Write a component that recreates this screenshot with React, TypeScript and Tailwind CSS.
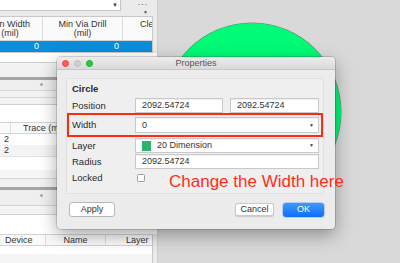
function Splitter() {
  return <div className="h-[3px] bg-[#a5a5a5]" />;
}

function LeftPanel() {
  return (
    <div className="w-[158px] h-full shrink-0 flex flex-col bg-[#ebebeb] border-r border-[#cdcdcd] text-[9px] leading-none text-[#333]">
      {/* toolbar */}
      <div className="h-[16px] shrink-0 flex">
        <div className="w-[121px] h-[11px] bg-white border-b border-r border-[#c4c4c4] flex items-center justify-end pr-[2px] text-[6px] text-[#444]">
          ▼
        </div>
        <div className="ml-[12px] w-[15px] flex flex-col items-end pt-[1px] text-[#555]">
          <span className="text-[9px] leading-[7px] tracking-[0.5px]">···</span>
          <span className="text-[5px] leading-[5px] mt-[2px]">▼</span>
        </div>
      </div>

      {/* table 1 */}
      <div className="mr-[4px] bg-white border-t border-r border-b border-[#c9c9c9]">
        <div className="h-[24px] flex border-b border-[#d4d4d4] bg-[#fafafa]">
          <div className="w-[43px] shrink-0 overflow-hidden border-r border-[#dcdcdc] flex">
            <div className="w-[66px] -ml-[23px] shrink-0 text-center leading-[9px] pt-[3px]">
              Min Width
              <br />
              (mil)
            </div>
          </div>
          <div className="w-[80px] shrink-0 border-r border-[#dcdcdc] text-center leading-[9px] pt-[3px]">
            Min Via Drill
            <br />
            (mil)
          </div>
          <div className="flex-1 overflow-hidden flex">
            <div className="w-[75px] shrink-0 text-center leading-[9px] pt-[3px]">
              Clearance
              <br />
              (mil)
            </div>
          </div>
        </div>
        <div className="h-[11px] flex items-center bg-[#0a8ddb] text-white">
          <div className="w-[43px] text-right pr-[4px]">0</div>
          <div className="w-[80px] text-right pr-[4px]">0</div>
        </div>
      </div>

      <div className="h-[10px] bg-white border-b border-[#cfcfcf]" />
      <div className="h-[14px] bg-[#f2f2f2]" />
      <Splitter />
      <div className="h-[10px] bg-[#efefef] flex items-center justify-center pr-[74px]">
        <div className="w-[3px] h-[3px] rounded-full bg-[#a9a9a9]" />
      </div>
      <div className="h-[7px] bg-[#f3f3f3] border-t border-[#d6d6d6]" />
      <div className="h-[7px] bg-[#f3f3f3] border-t border-[#d6d6d6]" />
      <div className="h-[19px] bg-white border-t border-[#cfcfcf]" />

      {/* table 2 */}
      <div className="mr-[4px] bg-white border-r border-[#c9c9c9]">
        <div className="h-[12px] flex items-center border-t border-b border-[#d4d4d4] bg-[#fafafa]">
          <div className="w-[11px] h-full border-r border-[#dcdcdc]" />
          <div className="pl-[12px] whitespace-nowrap">Trace (mil)</div>
        </div>
        <div className="h-[11px] flex items-center pl-[4px]">2</div>
        <div className="h-[11px] flex items-center pl-[4px] bg-[#f4f4f4]">2</div>
        <div className="h-[14px] border-t border-[#e2e2e2]" />
        <div className="h-[8px] bg-[#f6f6f6]" />
      </div>
      <div className="h-[9px] bg-[#f2f2f2] border-t border-[#d6d6d6]" />
      <Splitter />
      <div className="h-[16px] bg-[#efefef] flex items-center justify-center pr-[74px] pb-[4px] border-b border-[#d2d2d2]">
        <div className="w-[3px] h-[3px] rounded-full bg-[#a9a9a9]" />
      </div>
      <div className="h-[9px] bg-[#f4f4f4] border-b border-[#d2d2d2]" />
      <div className="h-[19px] bg-white" />

      {/* table 3 */}
      <div className="mr-[4px] flex-1 bg-white border-r border-[#c9c9c9]">
        <div className="h-[12px] flex items-center border-t border-b border-[#d4d4d4] bg-[#fafafa]">
          <div className="w-[46px] h-full flex items-center pl-[5px] border-r border-[#dcdcdc]">Device</div>
          <div className="w-[60px] h-full flex items-center justify-center border-r border-[#dcdcdc]">Name</div>
          <div className="flex-1 pl-[20px]">Layer</div>
        </div>
        <div className="h-[8px]" />
        <div className="h-[9px] bg-[#f5f5f5]" />
      </div>
    </div>
  );
}

function Field({ children, arrow, className = "" }: { children?: React.ReactNode; arrow?: boolean; className?: string }) {
  return (
    <div
      className={`h-[15px] bg-white border border-[#c9c9c9] shadow-[inset_0_1px_0_rgba(0,0,0,0.06)] flex items-center pl-[6px] pr-[4px] text-[9px] text-[#333] ${className}`}
    >
      <div className="flex-1 flex items-center">{children}</div>
      {arrow && <span className="text-[5px] text-[#444]">▼</span>}
    </div>
  );
}

function Dialog() {
  return (
    <div className="absolute left-[57px] top-[57px] w-[278px] h-[172px] bg-[#ececec] rounded-[4px] shadow-[0_6px_18px_rgba(0,0,0,0.35),0_0_0_1px_rgba(0,0,0,0.14)] flex flex-col overflow-hidden text-[#2b2b2b]">
      {/* title bar */}
      <div className="h-[13px] shrink-0 grid grid-cols-[1fr_auto_1fr] items-center bg-gradient-to-b from-[#ececec] to-[#dadada] border-b border-[#c6c6c6]">
        <div className="flex gap-[5px] pl-[5px]">
          <div className="w-[7px] h-[7px] rounded-full bg-[#fc5f57] border-[0.5px] border-[#de4a42]" />
          <div className="w-[7px] h-[7px] rounded-full bg-[#d0d0d0] border-[0.5px] border-[#bcbcbc]" />
          <div className="w-[7px] h-[7px] rounded-full bg-[#2ac840] border-[0.5px] border-[#1eaa32]" />
        </div>
        <div className="text-[9px] leading-none text-[#555]">Properties</div>
        <div />
      </div>

      {/* group box */}
      <div className="mx-[9px] mt-[8px] w-[258px] border border-[#e0e0e0] bg-[#efefef] rounded-[2px] pl-[5px] pr-[4px] pt-[4px] pb-[10px] text-[9.5px] leading-none">
        <div className="h-[12px] flex items-center font-bold">Circle</div>
        <div className="mt-[3px] flex items-center">
          <div className="w-[63px]">Position</div>
          <Field className="w-[88px]">2092.54724</Field>
          <Field className="w-[89px] ml-[7px]">2092.54724</Field>
        </div>
        <div className="-ml-[5px] -mr-[4px] h-[24px] border-2 border-[#ff2a10] flex items-center pl-[3px] pr-[2px]">
          <div className="w-[63px]">Width</div>
          <Field arrow className="flex-1 h-[16px]">0</Field>
        </div>
        <div className="mt-[1px] flex items-center">
          <div className="w-[63px]">Layer</div>
          <Field arrow className="flex-1 pl-[2px]">
            <span className="w-[9px] h-[10px] bg-[#2bb26c] mr-[6px]" />
            20 Dimension
          </Field>
        </div>
        <div className="mt-[1px] flex items-center">
          <div className="w-[63px]">Radius</div>
          <Field className="flex-1">2092.54724</Field>
        </div>
        <div className="mt-[4px] h-[10px] flex items-center">
          <div className="w-[65px]">Locked</div>
          <div className="w-[8px] h-[8px] bg-white border border-[#9c9c9c] rounded-[1.5px]" />
        </div>
      </div>

      {/* buttons */}
      <div className="mt-auto pb-[12px] pl-[12px] pr-[11px] flex items-center text-[9px] leading-none">
        <div className="w-[46px] h-[15px] bg-white border border-[#b8b8b8] rounded-[3px] flex items-center justify-center text-[#333]">
          Apply
        </div>
        <div className="flex-1" />
        <div className="w-[39px] h-[13px] bg-white border border-[#cbcbcb] rounded-[3px] shadow-[0_0.5px_1px_rgba(0,0,0,0.15)] flex items-center justify-center text-[#333]">
          Cancel
        </div>
        <div className="ml-[9px] w-[41px] h-[14px] rounded-[3px] bg-gradient-to-b from-[#3f99fb] to-[#0b6df5] shadow-[0_0_0_1px_rgba(80,150,250,0.35)] flex items-center justify-center text-white">
          OK
        </div>
      </div>
    </div>
  );
}

export default function App() {
  return (
    <div className="relative flex h-[263px] w-[400px] overflow-hidden bg-[#d9d9d9] font-['Liberation_Sans',Arial,sans-serif]">
      <LeftPanel />
      <div className="flex-1 bg-[#d9d9d9]" />
      <div className="absolute left-[163px] top-[23px] w-[178px] h-[178px] rounded-full bg-[#00fb77] shadow-[0_0_0_0.5px_rgba(40,70,50,0.6)]" />
      <Dialog />
      <div className="absolute left-[169px] top-[173px] text-[17px] leading-none text-[#ff2d1a] whitespace-nowrap">
        Change the Width here
      </div>
    </div>
  );
}
